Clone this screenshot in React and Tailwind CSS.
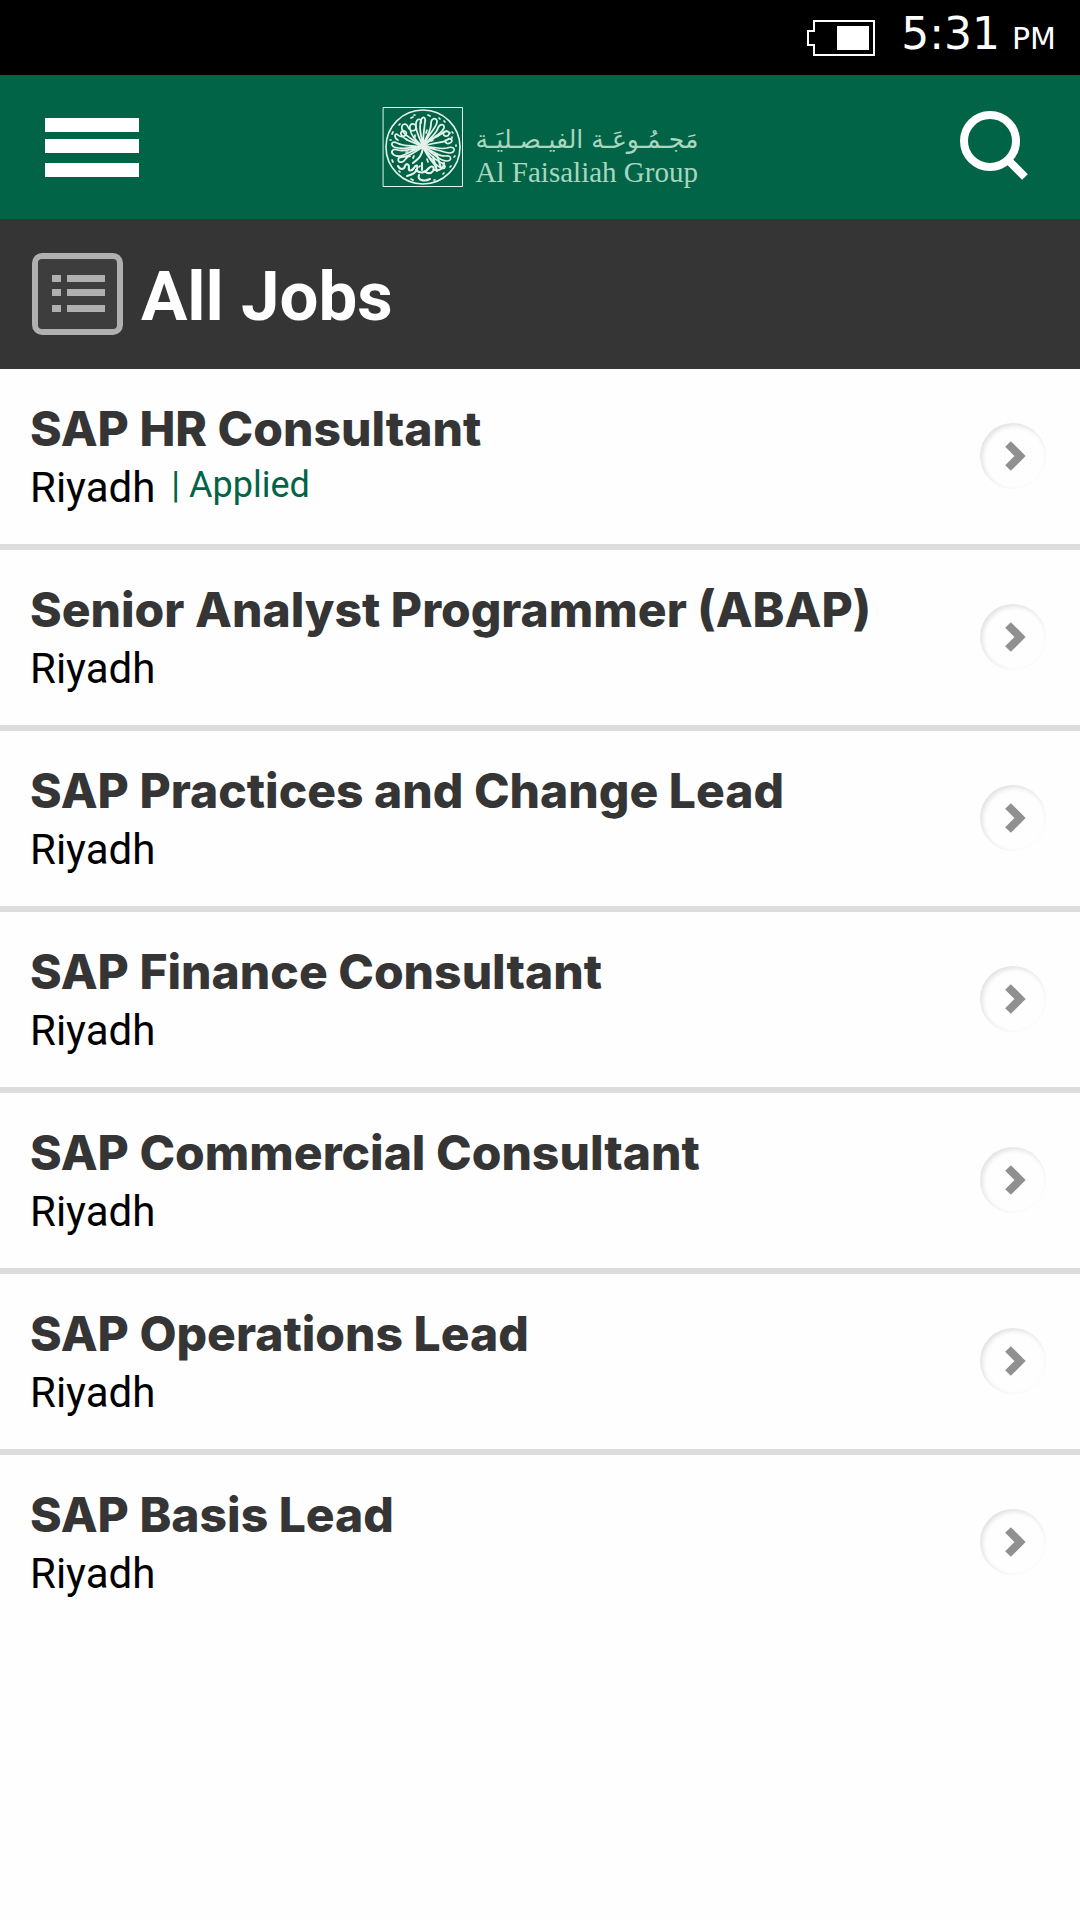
import React from 'react';

const jobs = [
    { id: 1, title: 'SAP HR Consultant', city: 'Riyadh', applied: true },
    { id: 2, title: 'Senior Analyst Programmer (ABAP)', city: 'Riyadh' },
    { id: 3, title: 'SAP Practices and Change Lead', city: 'Riyadh' },
    { id: 4, title: 'SAP Finance Consultant', city: 'Riyadh' },
    { id: 5, title: 'SAP Commercial Consultant', city: 'Riyadh' },
    { id: 6, title: 'SAP Operations Lead', city: 'Riyadh' },
    { id: 7, title: 'SAP Basis Lead', city: 'Riyadh' },
];

const StatusBar = () => (
    <div className="flex h-[75px] items-center justify-end gap-6 bg-black pr-6 text-white">
        <svg width="70" height="36" viewBox="0 0 70 36" fill="none" aria-hidden="true">
            <path d="M7 1H67V35H7V25H1V11H7Z" stroke="#fff" strokeWidth="2" />
            <rect x="30" y="6" width="32" height="24" fill="#fff" />
        </svg>
        <div className="flex items-baseline gap-3 pb-2 font-['DejaVu_Sans',sans-serif] leading-none">
            <span className="text-[44px]">5:31</span>
            <span className="text-[30px]">PM</span>
        </div>
    </div>
);

// round calligraphic seal, all strokes run out from the centre
const Emblem = () => (
    <svg width="82" height="82" viewBox="0 0 82 82" fill="none" stroke="#e3f3ec" strokeLinecap="round" strokeLinejoin="round" aria-hidden="true">
        <path d="M1.5 1.5H80.5V80.5H1.5Z" />
        <circle cx="41" cy="41" r="37" strokeWidth="1.6" />
        {/* upper left */}
        <g strokeWidth="1.7">
            <path d="M41 41C34 34 29 30 28 23C27 17 33 16 34 21C34 26 28 26 26 21C24 16 19 18 20 23C21 29 28 31 41 41" />
            <path d="M41 41C30 35 24 35 20 30C17 26 21 23 24 26C26 30 19 32 16 29C12 26 12 32 16 34" />
            <path d="M41 41C37 30 33 25 34 17C35 12 40 12 39 17" />
        </g>
        {/* top and upper right */}
        <g strokeWidth="1.8">
            <path d="M41 41C40 30 36 24 39 14C41 9 44 12 43 16C42 24 41 31 41 41" />
            <path d="M41 41C43 30 49 27 49 18C49 12 54 11 55 15C56 21 46 27 41 41" />
            <path d="M41 41C46 33 54 29 56 22C58 17 63 18 62 22C60 28 50 31 41 41" />
            <path d="M52 32C58 30 61 25 65 25C69 26 67 31 63 30C59 28 63 23 68 27" />
            <path d="M41 41C52 35 60 38 65 34C69 31 72 35 68 37C64 39 61 34 65 34" />
        </g>
        {/* right and lower right */}
        <g strokeWidth="1.6">
            <path d="M41 41C52 40 57 44 65 42C71 40 74 43 71 46C67 49 61 45 55 44C50 43 46 41 41 41" />
            <path d="M41 41C51 44 56 51 64 50C70 49 70 55 65 55C56 55 51 46 41 41" />
            <path d="M41 41C48 48 52 54 60 57C65 60 63 64 59 62C52 59 47 50 41 41" />
            <path d="M41 41C45 51 50 55 54 61" />
        </g>
        {/* left */}
        <g strokeWidth="1.8">
            <path d="M41 41C29 39 23 41 15 37C10 34 8 39 12 41C22 45 31 40 41 41" />
            <path d="M41 41C29 43 23 46 16 44C10 42 8 46 12 49C20 54 29 43 41 41" />
            <path d="M41 41C32 46 27 51 20 51C15 51 15 57 20 56C24 55 24 50 28 50" />
        </g>
        {/* bottom script */}
        <g strokeWidth="2.1">
            <path d="M16 60C18 64 22 64 23 60C24 57 27 58 27 61C26 65 29 66 32 62C34 58 36 59 35 63C34 67 29 69 25 70" />
            <path d="M34 64C38 68 43 67 47 62C50 59 53 61 51 65C49 68 45 68 43 65M40 64V57M53 64C58 65 62 62 62 57" />
            <path d="M37 69C35 74 42 76 48 73M55 65L51 51M59 62L55 49M31 57C36 53 40 51 41 41" />
        </g>
        {/* diacritics */}
        <path
            d="M29 12L31 11M32 9L33 9M18 18L17 19M11 26L10 28M8 34H9M24 33L25 34M33 29V31M46 9L48 10M57 12L58 13M62 15L63 16M70 26L71 27M70 31V32M74 39V40M73 50L72 51M69 60L68 61M62 67L61 68M52 74H53M31 74L29 73M18 66L17 65M11 56L10 54M24 46H26M44 27L45 24M49 35L51 34M52 48L54 49M32 50L31 52M45 53L46 56M38 60L37 61"
            strokeWidth="1.7"
        />
    </svg>
);

const Header = () => (
    <header className="flex h-36 items-center justify-between bg-[#026446] px-11">
        <button type="button" aria-label="Menu" className="w-24 shrink-0">
            <svg width="96" height="60" viewBox="0 0 96 60" fill="#fff">
                <rect x="1" y="1" width="94" height="14" />
                <rect x="1" y="22" width="94" height="14" />
                <rect x="1" y="46" width="94" height="14" />
            </svg>
        </button>
        <div className="flex items-end gap-3 text-[#a9d6c1]">
            <Emblem />
            <div className="flex flex-col whitespace-nowrap">
                <span dir="rtl" lang="ar" className="font-['DejaVu_Sans',sans-serif] text-[25px] leading-8">
                    مَجـمُـوعَـة الفيـصـليَـة
                </span>
                <span className="font-['Liberation_Serif',serif] text-[29px] leading-8">Al Faisaliah Group</span>
            </div>
        </div>
        <button type="button" aria-label="Search" className="w-24 shrink-0">
            <svg className="ml-auto mr-1" width="72" height="72" viewBox="0 0 72 72" fill="none" stroke="#fff">
                <circle cx="30" cy="30" r="26" strokeWidth="8" />
                <path d="M48 49L65 66" strokeWidth="8" />
            </svg>
        </button>
    </header>
);

const PageTitle = () => (
    <div className="flex h-[150px] items-center gap-[18px] bg-[#353535] px-8">
        <svg width="91" height="82" viewBox="0 0 91 82" aria-hidden="true">
            <rect x="3" y="3" width="85" height="76" rx="7" fill="#3d3d3d" stroke="#b0b0b0" strokeWidth="6" />
            <path d="M20 22h9v7h-9zM35 22h38v7H35zM20 36h9v7h-9zM35 36h38v7H35zM20 52h9v7h-9zM35 52h38v7H35z" fill="#b0b0b0" />
        </svg>
        <h1 className="pt-1 font-[Roboto,sans-serif] text-[69px] font-bold leading-none text-white">All Jobs</h1>
    </div>
);

const JobRow = ({ job }) => (
    <li className="border-b-[6px] border-[#dcdcdc] last:border-b-0">
        <a href="#" className="flex h-[175px] items-center justify-between pl-[30px] pr-[34px]">
            <div className="pt-0.5">
                <h2 className="font-[Inter,sans-serif] text-[48px] font-extrabold leading-[60px] text-[#353535]">{job.title}</h2>
                <div className="flex items-start gap-4 font-[Roboto,sans-serif] text-black">
                    <p className="text-[42px] leading-[58px]">{job.city}</p>
                    {job.applied && <p className="text-[36px] leading-[52px] text-[#026446]">| Applied</p>}
                </div>
            </div>
            <span className="mb-0.5 flex size-[66px] shrink-0 items-center justify-center rounded-full pl-1 shadow-[inset_2px_2px_5px_#dedede]">
                <svg width="22" height="32" viewBox="0 0 22 32" fill="none" aria-hidden="true">
                    <path d="M4 4L16 16L4 28" stroke="#909090" strokeWidth="8" />
                </svg>
            </span>
        </a>
    </li>
);

const App = () => {
    return (
        <div className="min-h-screen bg-[#fefefe]">
            <StatusBar />
            <Header />
            <PageTitle />
            <ul>
                {jobs.map((job) => (
                    <JobRow key={job.id} job={job} />
                ))}
            </ul>
        </div>
    );
};

export default App;
